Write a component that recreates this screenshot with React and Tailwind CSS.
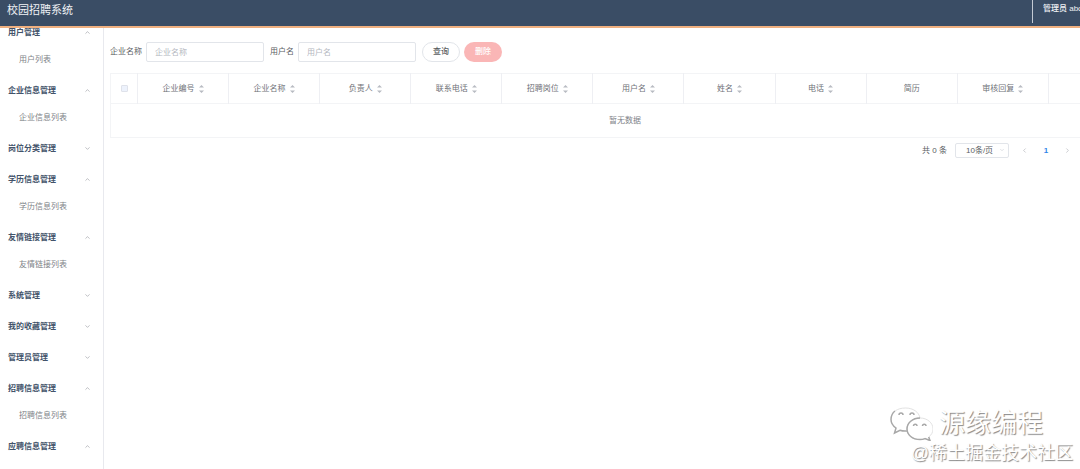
import React, { useState } from 'react';
import { ChevronUp, ChevronDown, ChevronLeft, ChevronRight } from 'lucide-react';

const initialMenu = [
  { title: '用户管理', child: '用户列表', open: true },
  { title: '企业信息管理', child: '企业信息列表', open: true },
  { title: '岗位分类管理', child: '岗位分类列表', open: false },
  { title: '学历信息管理', child: '学历信息列表', open: true },
  { title: '友情链接管理', child: '友情链接列表', open: true },
  { title: '系统管理', child: '系统列表', open: false },
  { title: '我的收藏管理', child: '我的收藏列表', open: false },
  { title: '管理员管理', child: '管理员列表', open: false },
  { title: '招聘信息管理', child: '招聘信息列表', open: true },
  { title: '应聘信息管理', child: '', open: true },
];

const columns = [
  { label: '企业编号', sortable: true },
  { label: '企业名称', sortable: true },
  { label: '负责人', sortable: true },
  { label: '联系电话', sortable: true },
  { label: '招聘岗位', sortable: true },
  { label: '用户名', sortable: true },
  { label: '姓名', sortable: true },
  { label: '电话', sortable: true },
  { label: '简历', sortable: false },
  { label: '审核回复', sortable: true },
];

function Header() {
  return (
    <header className="flex h-7 shrink-0 items-start justify-between border-b-2 border-[#efb080] bg-[#3a4d65] text-[#f0f2f5]">
      <h1 className="pl-[7px] text-[11px] leading-5">校园招聘系统</h1>
      <div className="h-[23px] w-12 overflow-hidden border-l border-[#c3cad3] pl-2.5 text-[8px] leading-[18px] font-medium whitespace-nowrap">
        管理员 abc
      </div>
    </header>
  );
}

function Sidebar() {
  const [menu, setMenu] = useState(initialMenu);
  const toggle = (title) => setMenu(menu.map(m => m.title === title ? { ...m, open: !m.open } : m));

  return (
    <nav className="w-26 shrink-0 overflow-hidden border-r border-[#e8e9ee]">
      <ul className="-mt-[11px]">
        {menu.map(({ title, child, open }) => {
          const Icon = open ? ChevronUp : ChevronDown;
          return (
            <li key={title}>
              <button onClick={() => toggle(title)} className="flex h-[31px] w-full items-center justify-between pr-3 pl-2 font-semibold text-[#43536a]">
                {title}
                <Icon size={7} strokeWidth={2} className="text-[#909399]" />
              </button>
              {open && child && <a href="#" className="mb-[3px] block h-6 pl-[19px] leading-6 text-[#808388]">{child}</a>}
            </li>
          );
        })}
      </ul>
    </nav>
  );
}

function SearchBar() {
  return (
    <form className="flex items-center" onSubmit={(e) => e.preventDefault()}>
      <label htmlFor="company">企业名称</label>
      <input id="company" placeholder="企业名称" className="mr-1.5 ml-1 h-5 w-[118px] rounded-xs border border-[#e2e5ea] px-2 placeholder:text-[#b4b8c0]" />
      <label htmlFor="username">用户名</label>
      <input id="username" placeholder="用户名" className="mr-1.5 ml-1 h-5 w-[118px] rounded-xs border border-[#e2e5ea] px-2 placeholder:text-[#b4b8c0]" />
      <button className="mr-1 h-5 w-[38px] rounded-full border border-[#e2e5ea] font-medium">查询</button>
      <button type="button" className="h-5 w-[38px] rounded-full bg-[#fab6b6] font-medium text-white">删除</button>
    </form>
  );
}

function SortIcon() {
  return (
    <svg width="5" height="8" viewBox="0 0 5 8" fill="#b8bbc2">
      <path d="M0 2.500L2.500 0L5 2.500Z M0 5.500L2.500 8L5 5.500Z" />
    </svg>
  );
}

function DataTable() {
  return (
    <div className="mt-[11px] overflow-hidden">
      <table className="w-full min-w-[1030px] table-fixed border-collapse border border-[#f3f4f6]">
        <thead>
          <tr className="h-[30px]">
            <th className="w-[27px] border-r border-[#eeeff3]">
              <input type="checkbox" disabled aria-label="全选" className="mx-auto block size-[7px] appearance-none rounded-[1px] border border-[#dfe2ea] bg-[#edf2fc]" />
            </th>
            {columns.map(({ label, sortable }) => (
              <th key={label} className="border-r border-[#eeeff3] font-normal text-[#6f7278]">
                <span className="flex items-center justify-center gap-1">
                  {label}
                  {sortable && <SortIcon />}
                </span>
              </th>
            ))}
            <th />
          </tr>
        </thead>
        <tbody>
          <tr className="h-[34px] border-t border-[#f3f4f6]">
            <td colSpan={columns.length + 2} className="text-center text-[#808388]">暂无数据</td>
          </tr>
        </tbody>
      </table>
    </div>
  );
}

function Pagination() {
  return (
    <div className="mt-[5px] flex items-center justify-end pr-[9px]">
      <span className="mr-2">共 0 条</span>
      <div className="relative mr-3">
        <select aria-label="每页条数" className="block h-[15px] w-[54px] appearance-none rounded-xs border border-[#e2e5ea] pl-2.5">
          <option>10条/页</option>
          <option>20条/页</option>
        </select>
        <ChevronDown size={6} className="pointer-events-none absolute top-1 right-1 text-[#c0c4cc]" />
      </div>
      <button aria-label="上一页" className="text-[#a8abb2]"><ChevronLeft size={7} /></button>
      <button className="mx-1 w-7 font-semibold text-[#2f86e8]">1</button>
      <button aria-label="下一页" className="text-[#a8abb2]"><ChevronRight size={7} /></button>
    </div>
  );
}

function Watermark() {
  return (
    <div className="pointer-events-none absolute right-[7px] bottom-1 flex flex-col items-end whitespace-nowrap text-white">
      <div className="mr-[30px] flex items-start gap-1.5">
        <svg width="44" height="36" viewBox="0 0 44 36" fill="white" stroke="#a8a8a8" strokeWidth="1">
          <path d="M16 26C14 26 12.500 25.700 11 25.300L5.500 28L7 23C3.500 20.500 2 17.500 2 14.500C2 8 8.500 3 16.500 3C24 3 30 7 31 13" stroke="none" />
          <path d="M18 26C15 26.300 12.500 25.800 11 25.300L5.500 28L7 23C3.500 20.500 2 17.500 2 14.500C2 11 3.500 8 6 6" fill="none" strokeWidth="1.500" />
          <path d="M6 6C9 4 12 3 16.500 3C24 3 30 7 31 13" fill="none" stroke="#e2e2e2" />
          <path d="M31 13C23.500 13 18 18 18 24C18 30 23.500 34.500 31 34.500C33 34.500 34.500 34.200 36 33.600L41 36L39.700 32C42.500 30 44 27 44 24C44 18 38.500 13 31 13Z" stroke="#e2e2e2" />
          <path d="M31 13C23.500 13 18 18 18 24C18 30 23.500 34.500 31 34.500C33 34.500 34.500 34.200 36 33.600L41 35.500L39.700 32" fill="none" strokeWidth="1.500" />
          <path d="M10 10A2 2 0 0 1 14 10M21 10A2 2 0 0 1 25 10M24.500 21A1.500 1.500 0 0 1 28 21M33.500 21A1.500 1.500 0 0 1 37 21" fill="none" strokeWidth="1.500" />
        </svg>
        <span className="text-[26px] leading-9 [text-shadow:1px_1px_1px_#888]">源缘编程</span>
      </div>
      <span className="text-[18px] leading-6 [text-shadow:1px_1px_1px_#888]">@稀土掘金技术社区</span>
    </div>
  );
}

export default function App() {
  return (
    <div className="relative flex h-screen flex-col overflow-hidden bg-white font-['Liberation_Sans','Noto_Sans_CJK_SC',sans-serif] text-[8px] text-[#5a5d62]">
      <Header />
      <div className="flex min-h-0 flex-1">
        <Sidebar />
        <main className="min-w-0 flex-1 pt-3.5 pl-1.5">
          <SearchBar />
          <DataTable />
          <Pagination />
        </main>
      </div>
      <Watermark />
    </div>
  );
}
